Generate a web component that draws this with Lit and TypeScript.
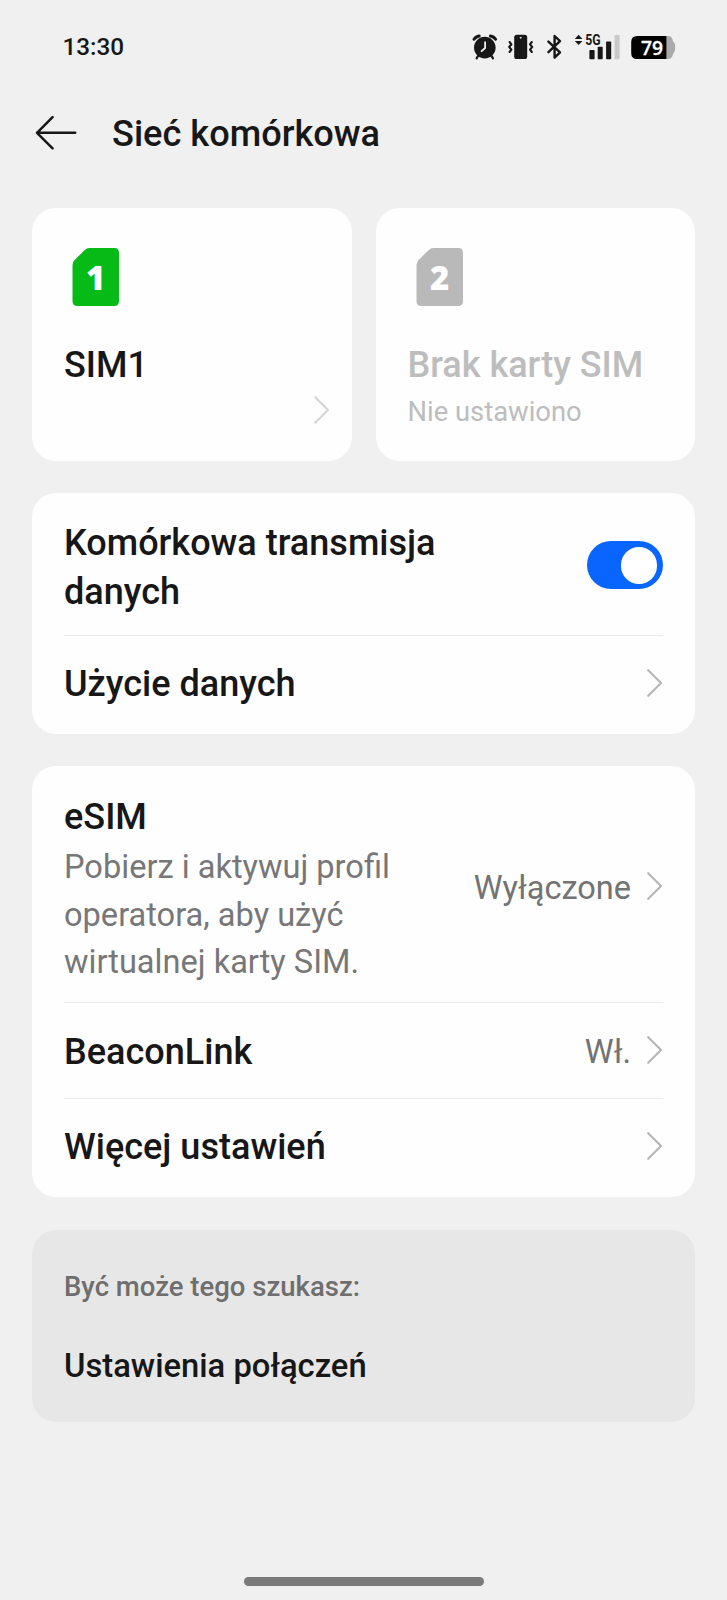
import { LitElement, html, css, nothing } from "lit";
import { customElement, property } from "lit/decorators.js";

@customElement("chevron-icon")
class ChevronIcon extends LitElement {
  static styles = css`
    :host { display: block; width: 16px; height: 28px; flex: none; color: #b6b6b6; }
    svg { display: block; }
  `;
  render() {
    return html`<svg width="16" height="28" viewBox="0 0 16 28" fill="none" stroke="currentColor"
      stroke-width="2.1" stroke-linecap="round" stroke-linejoin="round">
      <path d="M1.2 1.2L14 14L1.2 26.8" />
    </svg>`;
  }
}

@customElement("sim-card")
class SimCard extends LitElement {
  @property() slotNumber = "";
  @property() name = "";
  @property() detail = "";
  @property({ type: Boolean, reflect: true }) disabled = false;

  static styles = css`
    :host {
      box-sizing: border-box; display: flex; flex-direction: column; flex: 1;
      height: 253px; padding: 40px 22px 0 32px; border-radius: 24px;
      background: #fefefe; color: #171717;
    }
    :host([disabled]) { color: #bdbdbd; }
    .icon { display: block; margin-left: 8px; flex: none; }
    .shape { fill: #07bb16; }
    :host([disabled]) .shape { fill: #b9b9b9; }
    .digit { fill: #fff; font: 800 33px "Open Sans", sans-serif; text-anchor: middle; }
    .name { margin-top: 37px; font: 500 36px/44px Roboto, sans-serif; }
    .detail { margin-top: 8px; font: 400 27.4px/34px Roboto, sans-serif; }
    chevron-icon { align-self: flex-end; margin-top: 9px; color: #d6d6d6; }
  `;
  render() {
    return html`
      <svg class="icon" width="48" height="58" viewBox="0 0 48 58">
        <path class="shape" d="M17.5 0H42.3Q47 0 47 4.7V53.3Q47 58 42.3 58H5.2Q.5 58 .5 53.3V17Q.5 14.2 2.4 12.3L12.8 1.9Q14.7 0 17.5 0Z" />
        <text class="digit" x="23.6" y="42">${this.slotNumber}</text>
      </svg>
      <div class="name">${this.name}</div>
      ${this.disabled
        ? html`<div class="detail">${this.detail}</div>`
        : html`<chevron-icon></chevron-icon>`}
    `;
  }
}

@customElement("status-bar")
class StatusBar extends LitElement {
  static styles = css`
    :host {
      box-sizing: border-box; display: flex; align-items: center; height: 93px;
      padding: 0 51px 0 62.5px; color: #171717;
    }
    .time { flex: 1; font: 500 24.3px/30px Roboto, sans-serif; }
    svg { display: block; flex: none; overflow: visible; }
    .alarm { margin-right: 10px; }
    .vibrate { margin-right: 13px; }
    .bluetooth { margin-right: 12px; }
    .signal { margin-right: 10px; }
    .net { font: 700 14px Roboto, sans-serif; fill: #171717; }
    .level { font: 600 19.3px "Open Sans", sans-serif; fill: #fff; stroke: #fff; stroke-width: .3px; }
  `;
  render() {
    return html`
      <div class="time">13:30</div>
      <svg class="alarm" width="26" height="26" viewBox="0 0 26 26">
        <g fill="none" stroke="#171717" stroke-linecap="round">
          <path stroke-width="3" d="M2 5.3Q3.8 2.4 7.2 1.9M23.6 5.3Q21.8 2.4 18.4 1.9" />
          <path stroke-width="2.2" d="M6 22L4.6 24.4M19.6 22L21 24.4" />
        </g>
        <circle cx="12.8" cy="13.6" r="10.8" fill="#171717" />
        <path d="M13.1 8.2V14L9.6 17.2" fill="none" stroke="#f0f0f0" stroke-width="1.8" stroke-linecap="round" stroke-linejoin="round" />
      </svg>
      <svg class="vibrate" width="26" height="26" viewBox="0 0 26 26">
        <rect x="6.2" y=".7" width="13" height="24.4" rx="2.6" fill="#171717" />
        <circle cx="12.7" cy="3.8" r="1" fill="#cfcfcf" />
        <path fill="none" stroke="#171717" stroke-width="2.1" stroke-linejoin="round" stroke-linecap="round"
          d="M1.6 8L3.4 10.4L1.2 13L3.4 15.6L1.6 18M23.8 8L22 10.4L24.2 13L22 15.6L23.8 18" />
      </svg>
      <svg class="bluetooth" width="15" height="26" viewBox="0 0 15 26">
        <path fill="none" stroke="#171717" stroke-width="2.4" stroke-linejoin="round" stroke-linecap="round"
          d="M1.4 7.6L13 18.4L7.6 23.6V2L13 7.2L1.4 18.2" />
      </svg>
      <svg class="signal" width="47" height="26" viewBox="-1 0 47 26">
        <path fill="#171717" d="M3.6 .8L7.4 4.9H-.2ZM3.6 11L7.4 6.9H-.2Z" />
        <text class="net" x="10.2" y="11.3" textLength="15.4" lengthAdjust="spacingAndGlyphs">5G</text>
        <rect x="14.4" y="16" width="5.2" height="9.2" rx=".8" fill="#171717" />
        <rect x="22.7" y="12.8" width="5" height="12.4" rx=".8" fill="#171717" />
        <rect x="31.1" y="7.5" width="5.1" height="17.7" rx=".8" fill="#171717" />
        <rect x="39.6" y="1" width="5" height="24.2" rx=".8" fill="#c9c9c9" />
      </svg>
      <svg width="45" height="26" viewBox="0 0 45 26">
        <path fill="#aaa" d="M30 2H37Q41.2 2 42 6.9Q44.3 8.9 44.3 13.4Q44.3 17.9 42 20.2Q41.2 25 37 25H30Z" />
        <path fill="#020202" d="M35.4 2V25H6.2Q.2 25 .2 19V8Q.2 2 6.2 2Z" />
        <text class="level" x="10.1" y="20.6">79</text>
      </svg>
    `;
  }
}

interface Row { label: string; value?: string; size: string; lines?: string[]; toggle?: boolean; }

const DATA_ROWS: Row[] = [
  { label: "Komórkowa transmisja danych", size: "data", toggle: true },
  { label: "Użycie danych", size: "last" },
];

const ESIM_ROWS: Row[] = [
  {
    label: "eSIM", value: "Wyłączone", size: "esim",
    lines: ["Pobierz i aktywuj profil", "operatora, aby użyć", "wirtualnej karty SIM."],
  },
  { label: "BeaconLink", value: "Wł.", size: "mid" },
  { label: "Więcej ustawień", size: "last" },
];

@customElement("app-root")
class AppRoot extends LitElement {
  static styles = css`
    :host {
      box-sizing: border-box; display: flex; flex-direction: column;
      width: 727px; height: 1600px; background: #f0f0f0; color: #171717;
      font-family: Roboto, sans-serif;
    }
    .header { display: flex; align-items: center; height: 80px; padding-left: 34.5px; }
    .back { display: block; width: 42px; height: 36px; }
    h1 { margin: 1px 0 0 35.5px; font: 500 36.15px/44px Roboto, sans-serif; }
    .content { display: flex; flex-direction: column; gap: 32px; padding: 35px 32px 0; }
    .sims { display: flex; gap: 24px; height: 252.8px; }
    .card { border-radius: 24px; background: #fefefe; padding: 0 32px; }
    .row {
      box-sizing: border-box; display: flex; align-items: center;
      border-top: 1.5px solid #ececec;
    }
    .row:first-child { border-top: none; }
    .data { height: 142px; padding-top: 7px; }
    .data .text { padding-top: 2px; }
    .esim { height: 235.5px; }
    .mid { height: 96px; }
    .last { height: 99.6px; padding-bottom: 1px; }
    .last chevron-icon { margin-bottom: 3px; }
    .mid chevron-icon { margin-bottom: 1px; }
    .esim chevron-icon { margin-top: 4px; }
    .text { flex: 1; }
    .esim .text { padding-top: 12px; }
    .mid .text { padding-top: 3.4px; }
    .esim .label { margin-bottom: 2px; }
    .label { font: 500 36.05px/49px Roboto, sans-serif; }
    .data .label { width: 380px; }
    .sub { font: 400 32.6px/47.5px Roboto, sans-serif; color: #777; }
    .value { font: 400 32.5px/44px Roboto, sans-serif; color: #737373; margin-right: 16px; }
    .esim .value { padding-top: 7.5px; }
    .mid .value { padding-top: 3px; }
    .toggle {
      box-sizing: border-box; display: flex; justify-content: flex-end; align-items: center;
      width: 76px; height: 48px; padding-right: 6px; border-radius: 24px; background: #0866fe;
      margin-bottom: 4px;
    }
    .knob { width: 36.5px; height: 36.5px; border-radius: 50%; background: #fff; }
    .hint {
      box-sizing: border-box; height: 192px; border-radius: 24px; background: #e7e7e7;
      margin-top: .4px; padding: 38.9px 32px 0;
    }
    .hint-title { font: 500 27.5px/36px Roboto, sans-serif; color: #6e6e6e; }
    .hint-link { margin-top: 39px; font: 500 32.75px/44px Roboto, sans-serif; }
    .home { display: flex; justify-content: center; margin-top: auto; padding-bottom: 14.5px; }
    .pill { width: 240px; height: 8.5px; border-radius: 5px; background: #7a7a7a; }
  `;

  private row(r: Row) {
    return html`
      <div class="row ${r.size}">
        <div class="text">
          <div class="label">${r.label}</div>
          ${r.lines ? r.lines.map((l) => html`<div class="sub">${l}</div>`) : nothing}
        </div>
        ${r.value ? html`<div class="value">${r.value}</div>` : nothing}
        ${r.toggle
          ? html`<div class="toggle"><div class="knob"></div></div>`
          : html`<chevron-icon></chevron-icon>`}
      </div>
    `;
  }

  render() {
    return html`
      <status-bar></status-bar>
      <div class="header">
        <svg class="back" viewBox="0 0 42 36" fill="none" stroke="#171717" stroke-width="2.5"
          stroke-linecap="round" stroke-linejoin="round">
          <path d="M40.2 17.8H2M17.6 2.2L2 17.8L17.6 33.4" />
        </svg>
        <h1>Sieć komórkowa</h1>
      </div>
      <div class="content">
        <div class="sims">
          <sim-card slotNumber="1" name="SIM1"></sim-card>
          <sim-card slotNumber="2" name="Brak karty SIM" detail="Nie ustawiono" disabled></sim-card>
        </div>
        <div class="card">${DATA_ROWS.map((r) => this.row(r))}</div>
        <div class="card">${ESIM_ROWS.map((r) => this.row(r))}</div>
        <div class="hint">
          <div class="hint-title">Być może tego szukasz:</div>
          <div class="hint-link">Ustawienia połączeń</div>
        </div>
      </div>
      <div class="home"><div class="pill"></div></div>
    `;
  }
}
